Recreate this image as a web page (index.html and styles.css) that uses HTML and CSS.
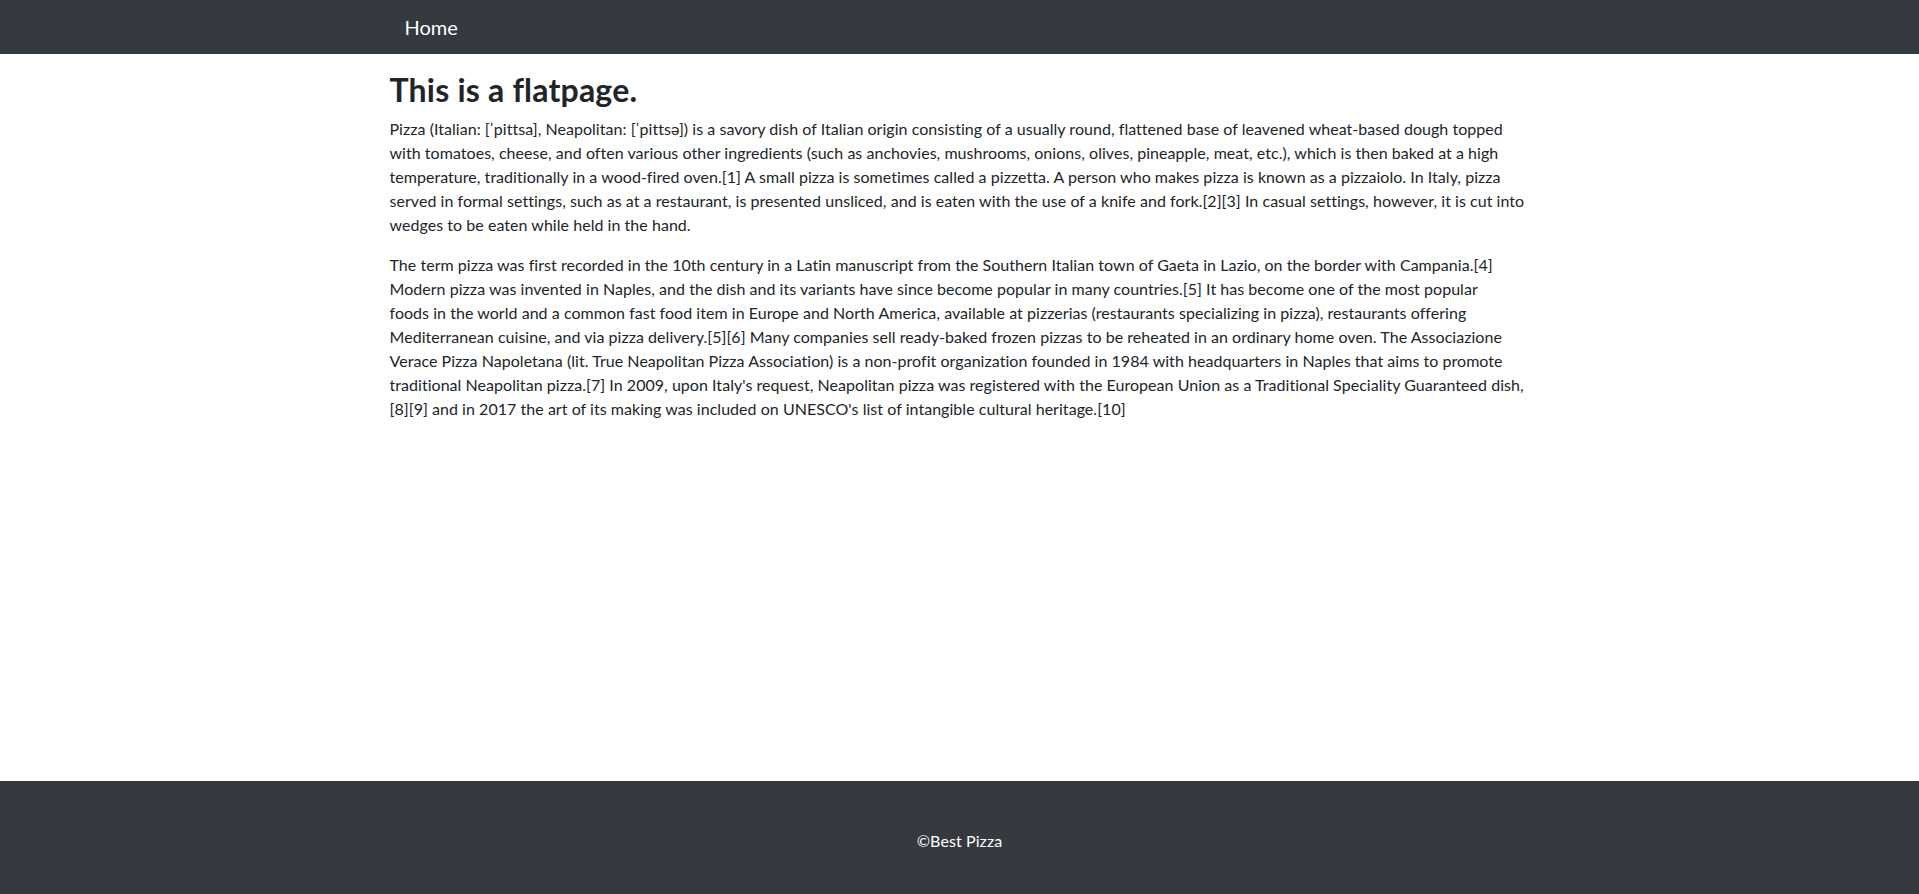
FILE: index.html
```html
<!DOCTYPE html>
<html lang="en">
<head>
<meta charset="utf-8">
<title>Flatpage</title>
<link rel="stylesheet" href="styles.css">
</head>
<body>
<nav class="navbar">
  <div class="navbar-inner">
    <a class="brand" href="#">Home</a>
  </div>
</nav>
<main class="page">
  <h1 class="title">This is a flatpage.</h1>
  <p class="text">Pizza (Italian: [ˈpittsa], Neapolitan: [ˈpittsə]) is a savory dish of Italian origin consisting of a usually round, flattened base of leavened wheat-based dough topped with tomatoes, cheese, and often various other ingredients (such as anchovies, mushrooms, onions, olives, pineapple, meat, etc.), which is then baked at a high temperature, traditionally in a wood-fired oven.[1] A small pizza is sometimes called a pizzetta. A person who makes pizza is known as a pizzaiolo. In Italy, pizza served in formal settings, such as at a restaurant, is presented unsliced, and is eaten with the use of a knife and fork.[2][3] In casual settings, however, it is cut into wedges to be eaten while held in the hand.</p>
  <p class="text">The term pizza was first recorded in the 10th century in a Latin manuscript from the Southern Italian town of Gaeta in Lazio, on the border with Campania.[4] Modern pizza was invented in Naples, and the dish and its variants have since become popular in many countries.[5] It has become one of the most popular<br>foods in the world and a common fast food item in Europe and North America, available at pizzerias (restaurants specializing in pizza), restaurants offering Mediterranean cuisine, and via pizza delivery.[5][6] Many companies sell ready-baked frozen pizzas to be reheated in an ordinary home oven. The Associazione Verace Pizza Napoletana (lit. True Neapolitan Pizza Association) is a non-profit organization founded in 1984 with headquarters in Naples that aims to promote traditional Neapolitan pizza.[7] In 2009, upon Italy's request, Neapolitan pizza was registered with the European Union as a Traditional Speciality Guaranteed dish,[8][9] and in 2017 the art of its making was included on UNESCO's list of intangible cultural heritage.[10]</p>
</main>
<footer class="footer">
  <div class="footer-text">©Best Pizza</div>
</footer>
</body>
</html>
```
FILE: styles.css
```css
* { box-sizing: border-box; }
html, body { margin: 0; padding: 0; }
body {
  min-height: 100vh;
  display: flex;
  flex-direction: column;
  font-family: Lato, "Liberation Sans", sans-serif;
  font-size: 16px;
  line-height: 24px;
  color: #212529;
  background: #fff;
}
.navbar {
  background: #343a40;
  height: 54px;
}
.navbar-inner {
  width: 1140px;
  margin: 0 auto;
  padding: 0 15px;
  height: 100%;
  display: flex;
  align-items: center;
}
.brand {
  color: #fff;
  text-decoration: none;
  font-size: 20px;
  line-height: 30px;
}
.page {
  flex: 1;
  width: 1140px;
  margin: 17px auto 0;
}
.title {
  margin: 0 0 8px;
  font-size: 32px;
  line-height: 38px;
  font-weight: 700;
  letter-spacing: 0.2px;
}
.text {
  margin: 0 0 16px;
  letter-spacing: 0.04px;
}
.footer {
  background: #343a40;
  height: 113px;
  display: flex;
  align-items: center;
  justify-content: center;
  color: #fff;
}
.footer-text {
  font-size: 16px;
  line-height: 24px;
  margin-top: 6px;
  letter-spacing: 0.1px;
}
```
